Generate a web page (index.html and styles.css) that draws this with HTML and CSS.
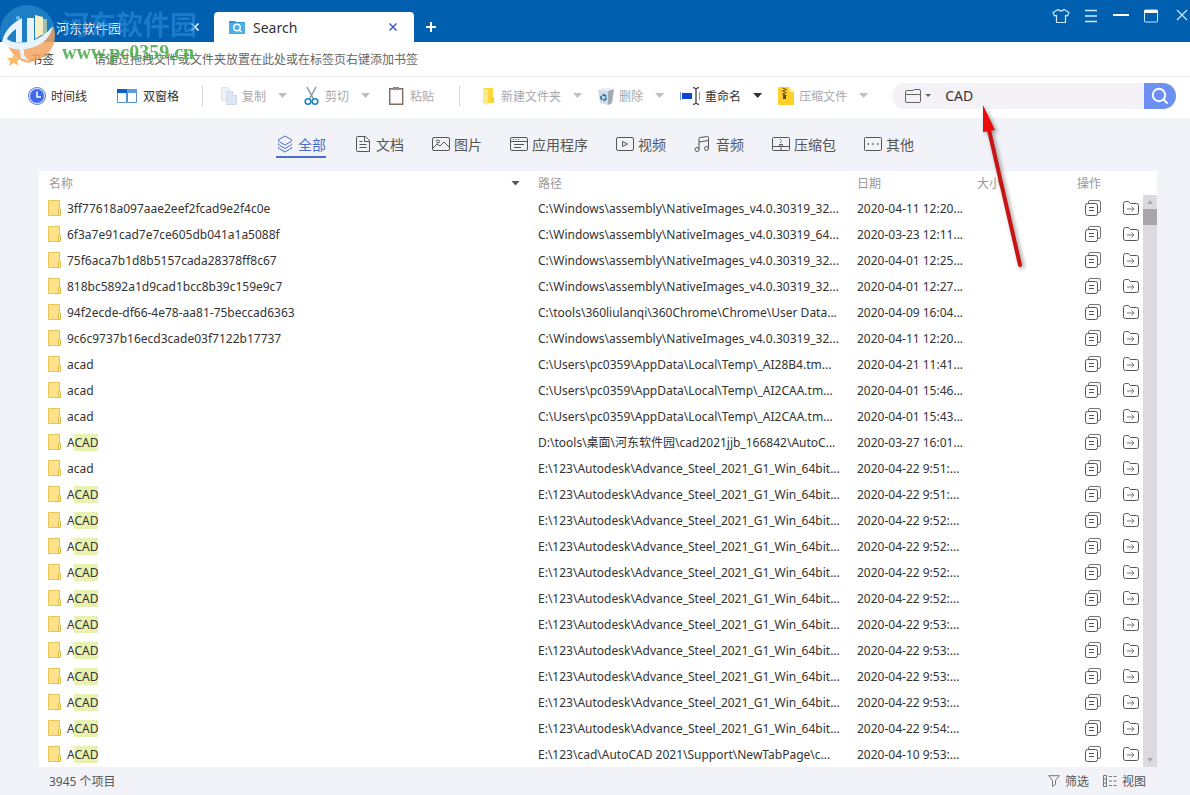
FILE: index.html
```html
<!DOCTYPE html>
<html lang="zh-CN">
<head>
    <meta charset="UTF-8">
    <meta name="viewport" content="width=device-width, initial-scale=1.0">
    <title>Search</title>
    <link rel="stylesheet" href="styles.css">
</head>
<body>
    <svg class="defs" width="0" height="0">
        <symbol id="i-folder" viewBox="0 0 14 16">
            <path d="M.5.5h11v15H.5z" fill="#fde28a" stroke="#e6c455"/>
            <path d="M10.5 9.500c0-1 2-1 2 0v6h-2z" fill="#fff0a8" stroke="#dfbb45"/>
        </symbol>
        <symbol id="i-copy" viewBox="0 0 16 16">
            <path d="M3.500 3V2q0-1.500 1.500-1.500h9q1.500 0 1.500 1.500v9q0 1.500-1.500 1.500h-1" fill="none" stroke="#777"/>
            <rect x=".5" y="3.500" width="12" height="12" rx="2" fill="#fff" stroke="#555"/>
            <path d="M4 7.500h5M4 10.500h5" stroke="#555"/>
        </symbol>
        <symbol id="i-move" viewBox="0 0 16 14">
            <path d="M.5 11.500v-9Q.5.500 2.500.500h3l2 2h6q2 0 2 2v7q0 2-2 2h-11q-2 0-2-2z" fill="none" stroke="#555"/>
            <path d="M4 8h7M8.500 5.500L11 8l-2.500 2.500" fill="none" stroke="#777"/>
        </symbol>
    </svg>

    <header class="titlebar">
        <div class="tabs">
            <div class="tab">
                <svg width="14" height="18" viewBox="0 0 14 18"><path d="M1 1h12v16H1z" fill="#fde28a"/></svg>
                <span class="tab-title">河东软件园</span>
                <button class="tab-close" aria-label="关闭">
                    <svg width="8" height="8" viewBox="0 0 8 8"><path d="M.5.5l7 7M7.500.5l-7 7" stroke="currentColor" stroke-width="1.500"/></svg>
                </button>
            </div>
            <div class="tab active">
                <svg width="16" height="14" viewBox="0 0 16 14">
                    <path d="M0 1h6l1 1h9v12H0z" fill="#2f97d8"/><path d="M0 3h16v11H0z" fill="#4cb0e8"/>
                    <circle cx="8" cy="7.500" r="3.200" fill="none" stroke="#fff" stroke-width="1.400"/><path d="M10.300 10l2 2" stroke="#fff" stroke-width="1.400"/>
                </svg>
                <span class="tab-title">Search</span>
                <button class="tab-close" aria-label="关闭">
                    <svg width="8" height="8" viewBox="0 0 8 8"><path d="M.5.5l7 7M7.500.5l-7 7" stroke="currentColor" stroke-width="1.500"/></svg>
                </button>
            </div>
            <button class="tab-add" aria-label="新标签页">
                <svg width="10" height="10" viewBox="0 0 10 10"><path d="M5 0v10M0 5h10" stroke="#fff" stroke-width="2"/></svg>
            </button>
        </div>
        <div class="window-buttons">
            <button aria-label="皮肤"><svg width="18" height="16" viewBox="0 0 18 16"><path d="M6 1.500L1 4.500l1.500 3.500 2-.7V14.500h9V7.300l2 .7L17 4.500l-5-3Q9 4.500 6 1.500z" fill="none" stroke="#cfeaff" stroke-width="1.200" stroke-linejoin="round"/></svg></button>
            <button aria-label="菜单"><svg width="18" height="16" viewBox="0 0 18 16"><path d="M3 2.500h12M3 8h12M3 13.500h12" stroke="#cfeaff" stroke-width="1.300"/></svg></button>
            <button aria-label="最小化"><svg width="18" height="16" viewBox="0 0 18 16"><path d="M1 7h16" stroke="#fff" stroke-width="2"/></svg></button>
            <button aria-label="最大化"><svg width="18" height="16" viewBox="0 0 18 16"><rect x="2.500" y="2" width="13" height="12" rx="1" fill="none" stroke="#cfeaff"/><path d="M2 3.500h14" stroke="#fff" stroke-width="3"/></svg></button>
            <button aria-label="关闭窗口"><svg width="18" height="16" viewBox="0 0 18 16"><path d="M5 2l10 10M15 2L5 12" stroke="#cfeaff" stroke-width="1.200"/></svg></button>
        </div>
    </header>

    <div class="bookmarks">
        <span class="bookmarks-label">书签</span>
        <span class="bookmarks-hint">请通过拖拽文件或文件夹放置在此处或在标签页右键添加书签</span>
    </div>

    <div class="toolbar">
        <div class="group group-view">
            <button class="tool">
                <svg width="18" height="18" viewBox="0 0 18 18"><circle cx="9" cy="9" r="9" fill="#5b78d8"/><circle cx="9" cy="9" r="8" fill="#dfe8ff"/><circle cx="9" cy="9" r="7" fill="#3f6ae8"/><path d="M9 4.500V10h4" fill="none" stroke="#fff" stroke-width="1.500"/></svg>
                时间线
            </button>
            <button class="tool">
                <svg width="22" height="16" viewBox="0 0 22 16"><path d="M1.500 1.500h9v13h-9zM11.500 1.500h9v13h-9z" fill="#fff" stroke="#5590c8"/><path d="M1 1h10v4H1z" fill="#0b62c4"/><path d="M11 1h10v4H11z" fill="#5c9be0"/></svg>
                双窗格
            </button>
        </div>
        <div class="group">
            <button class="tool" disabled>
                <svg width="16" height="18" viewBox="0 0 16 18"><path d="M.5.5h6l3 3v10h-9z" fill="#f0f2f5" stroke="#dde0e5"/><path d="M5.500 4.500h6l4 4v9h-10z" fill="#dce7f3" stroke="#cfdae6"/><path d="M11.500 4.500v4h4" fill="#fff" stroke="#cfdae6"/></svg>
                复制<i class="caret"></i>
            </button>
            <button class="tool" disabled>
                <svg width="16" height="20" viewBox="0 0 16 20"><path d="M3 1l6.500 12M12 1L5.500 13" stroke="#8b96a0" stroke-width="1.500"/><circle cx="4" cy="15.500" r="2.800" fill="none" stroke="#1b86c0" stroke-width="1.600"/><circle cx="11" cy="15.500" r="2.800" fill="none" stroke="#1b86c0" stroke-width="1.600"/></svg>
                剪切<i class="caret"></i>
            </button>
            <button class="tool" disabled>
                <svg width="18" height="20" viewBox="0 0 18 20"><path d="M2.700 2.700h13v15.600h-13z" fill="#fbfbfd" stroke="#806a5c" stroke-width="1.400"/><path d="M6 1h6v3H6z" fill="#8d8d90"/></svg>
                粘贴
            </button>
        </div>
        <div class="group group-file">
            <button class="tool" disabled>
                <svg width="16" height="18" viewBox="0 0 16 18"><path d="M3 1h10v15H3z" fill="#ffd93b"/><path d="M3 1l5 2v15l-5-2z" fill="#ffe98a"/><path d="M11 10h3v6h-3z" fill="#f8cf35"/></svg>
                新建文件夹<i class="caret"></i>
            </button>
            <button class="tool" disabled>
                <svg width="16" height="18" viewBox="0 0 16 18"><path d="M0 3l6-2 10 1-2 14-4 2-8-2z" fill="#d5dae0"/><path d="M10 4l6-2-2 14-4 2z" fill="#a5abb5"/><path d="M0 3l6-2 10 1-6 2z" fill="#eceff2"/><circle cx="5.500" cy="10.500" r="2.500" fill="none" stroke="#1978ba" stroke-width="1.800" stroke-dasharray="4 1.200"/></svg>
                删除<i class="caret"></i>
            </button>
            <button class="tool">
                <svg width="20" height="18" viewBox="0 0 20 18"><path d="M.5 5v8M19.500 5v8" stroke="#6b9ad8"/><path d="M2 6h10v6H2z" fill="#0b45d8"/><path d="M13 .7q2 0 3 1.300 1-1.300 3-1.300M16 2v14M13 17.300q2 0 3-1.300 1 1.300 3 1.300" fill="none" stroke="#333" stroke-width="1.200"/></svg>
                重命名<i class="caret"></i>
            </button>
            <button class="tool" disabled>
                <svg width="16" height="18" viewBox="0 0 16 18"><path d="M0 0h11l5 5v13H0z" fill="#ffcf2b"/><path d="M11 0l5 5h-5z" fill="#fff0a8"/><path d="M4.500 1l4 1.500-4 1.500 4 1.500-4 1.500 4 1.500" fill="none" stroke="#6d5a20"/><path d="M5 8h3v4H5z" fill="#5a4b22"/></svg>
                压缩文件<i class="caret"></i>
            </button>
        </div>
        <form class="search">
            <button type="button" class="search-scope" aria-label="搜索范围">
                <svg width="16" height="14" viewBox="0 0 16 14"><path d="M.5 12V3q0-1.500 1.500-1.500h6l1.500-1H14q1.500 0 1.500 1.500v10q0 1.500-1.500 1.500H2Q.5 13.500.5 12zM.5 5.500h15" fill="none" stroke="#666"/></svg>
                <i class="caret"></i>
            </button>
            <input class="search-input" type="text" aria-label="搜索" value="CAD">
            <button type="button" class="search-go" aria-label="开始搜索">
                <svg width="18" height="18" viewBox="0 0 18 18"><circle cx="8" cy="8" r="6.200" fill="none" stroke="#fff" stroke-width="2"/><path d="M12.500 12.500l4 4" stroke="#fff" stroke-width="2"/></svg>
            </button>
        </form>
    </div>

    <nav class="categories">
        <a href="#" class="category current">
            <svg width="18" height="18" viewBox="0 0 18 18"><path d="M9 1l6.500 3.700v1.500L9 10 2.500 6.200V4.700zM2.500 8.500v1.200L9 13.500l6.500-3.800V8.500M2.500 12v1.200L9 17l6.500-3.800V12"/></svg>全部
        </a>
        <a href="#" class="category">
            <svg width="18" height="18" viewBox="0 0 18 18"><path d="M3.500 1.500h8l4 4v11h-12q-1 0-1-1v-13q0-1 1-1zM10.500 2v4.500h5M5.500 6.500h3M5.500 9.500h7M5.500 12.500h7"/></svg>文档
        </a>
        <a href="#" class="category">
            <svg width="18" height="18" viewBox="0 0 18 18"><rect x=".5" y="2.500" width="17" height="13" rx="1.500"/><circle cx="6" cy="6.500" r="1.500"/><path d="M1 13l4-4 3 2 4-4 5 5"/></svg>图片
        </a>
        <a href="#" class="category">
            <svg width="18" height="18" viewBox="0 0 18 18"><rect x=".5" y="2.500" width="17" height="13" rx="1.500"/><path d="M.5 6.500h17M3 4.500h1M5.500 4.500h1M8 4.500h1M4 9.500h10M4 12.500h7"/></svg>应用程序
        </a>
        <a href="#" class="category">
            <svg width="18" height="18" viewBox="0 0 18 18"><rect x=".5" y="2.500" width="17" height="13" rx="1.500"/><path d="M6.500 6.500v5l5-2.500z"/></svg>视频
        </a>
        <a href="#" class="category">
            <svg width="18" height="18" viewBox="0 0 18 18"><circle cx="3" cy="14.500" r="2"/><circle cx="12.500" cy="13.500" r="2"/><path d="M5 14.500V3.500q0-1 1-1l7.500-1q1 0 1 1v11M5 7l9.500-1.500"/></svg>音频
        </a>
        <a href="#" class="category">
            <svg width="18" height="18" viewBox="0 0 18 18"><rect x=".5" y="2.500" width="17" height="13" rx="1"/><path d="M.5 11.500h17M8.500 4v1M9.500 5.500v1M8.500 7v1M7.500 11.500v-2h3v2M9 12v3"/></svg>压缩包
        </a>
        <a href="#" class="category">
            <svg width="18" height="18" viewBox="0 0 18 18"><rect x=".5" y="2.500" width="17" height="13" rx="1"/><path d="M3.500 9h1.500M8.200 9h1.500M13 9h1.500" stroke-width="1.500"/></svg>其他
        </a>
    </nav>

    <main class="results">
        <table class="files">
            <thead>
                <tr>
                    <th class="col-name"><span class="sortable">名称<i class="caret"></i></span></th>
                    <th class="col-path">路径</th>
                    <th class="col-date">日期</th>
                    <th class="col-size">大小</th>
                    <th class="col-ops">操作</th>
                </tr>
            </thead>
            <tbody id="rows"></tbody>
        </table>
        <div class="scrollbar">
            <i class="arrow-up"></i>
            <div class="thumb"></div>
            <i class="arrow-down"></i>
        </div>
    </main>

    <footer class="statusbar">
        <span class="count">3945 个项目</span>
        <button class="status-button">
            <svg width="12" height="12" viewBox="0 0 12 12"><path d="M.7.7h10.600L7.500 5.500v4l-3 2v-6z" fill="none" stroke="#777"/></svg>筛选
        </button>
        <button class="status-button">
            <svg width="14" height="12" viewBox="0 0 14 12"><path d="M.5.5h3v11h-3zM.5 4h3M.5 8h3M6 1.500h3M10.500 1.500h3M6 6h3M10.500 6h3M6 10.500h3M10.500 10.500h3" fill="none" stroke="#777"/></svg>视图
        </button>
    </footer>

    <div class="watermark">
        <svg class="watermark-logo" width="58" height="68" viewBox="0 0 58 68">
            <path d="M1 40A27 27 0 0 1 54 25Q48 44 14 44 6 44 1 40z" fill="#3b9ddc" opacity=".5"/>
            <path d="M8 46Q30 48 54 27 60 56 28 63 14 60 8 46z" fill="#f4a460" opacity=".85"/>
            <path d="M2 42Q5 27 22 18v24h-6V29Q9 34 7 39q8 6 22 3 14-4 24-16-4 17-22 22Q12 53 2 42zM27 18h7v24h-7zM19 46h5v9l5 6-8-3z" fill="#e8f4fc"/>
            <path d="M35 15l8 2v17l-8 5z" fill="#f6efc4"/>
            <circle cx="18" cy="18" r="2" fill="#6fc0f0"/>
            <path d="M14 54l2 4 5 0-4 3 2 5-5-3-5 3 1-5-3-3h5z" fill="#f9bc6a"/>
        </svg>
        <span class="watermark-name">河东软件园</span>
        <span class="watermark-url">www.pc0359.cn</span>
    </div>

    <svg class="pointer" width="60" height="176" viewBox="0 0 60 176">
        <path d="M45 165L14 30" stroke="#c81414" stroke-width="4" stroke-linecap="round"/>
        <path d="M8 5L20 30 8 32z" fill="#f00808"/>
    </svg>

    <script>
        const steel = 'E:\\123\\Autodesk\\Advance_Steel_2021_G1_Win_64bit...';
        const native32 = 'C:\\Windows\\assembly\\NativeImages_v4.0.30319_32...';
        const native64 = 'C:\\Windows\\assembly\\NativeImages_v4.0.30319_64...';
        const files = [
            ['3ff77618a097aae2eef2fcad9e2f4c0e', native32, '2020-04-11 12:20...'],
            ['6f3a7e91cad7e7ce605db041a1a5088f', native64, '2020-03-23 12:11...'],
            ['75f6aca7b1d8b5157cada28378ff8c67', native32, '2020-04-01 12:25...'],
            ['818bc5892a1d9cad1bcc8b39c159e9c7', native32, '2020-04-01 12:27...'],
            ['94f2ecde-df66-4e78-aa81-75beccad6363', 'C:\\tools\\360liulanqi\\360Chrome\\Chrome\\User Data...', '2020-04-09 16:04...'],
            ['9c6c9737b16ecd3cade03f7122b17737', native32, '2020-04-11 12:20...'],
            ['acad', 'C:\\Users\\pc0359\\AppData\\Local\\Temp\\_AI28B4.tm...', '2020-04-21 11:41...'],
            ['acad', 'C:\\Users\\pc0359\\AppData\\Local\\Temp\\_AI2CAA.tm...', '2020-04-01 15:46...'],
            ['acad', 'C:\\Users\\pc0359\\AppData\\Local\\Temp\\_AI2CAA.tm...', '2020-04-01 15:43...'],
            ['ACAD', 'D:\\tools\\桌面\\河东软件园\\cad2021jjb_166842\\AutoC...', '2020-03-27 16:01...'],
            ['acad', steel, '2020-04-22 9:51:...'],
            ['ACAD', steel, '2020-04-22 9:51:...'],
            ['ACAD', steel, '2020-04-22 9:52:...'],
            ['ACAD', steel, '2020-04-22 9:52:...'],
            ['ACAD', steel, '2020-04-22 9:52:...'],
            ['ACAD', steel, '2020-04-22 9:52:...'],
            ['ACAD', steel, '2020-04-22 9:53:...'],
            ['ACAD', steel, '2020-04-22 9:53:...'],
            ['ACAD', steel, '2020-04-22 9:53:...'],
            ['ACAD', steel, '2020-04-22 9:53:...'],
            ['ACAD', steel, '2020-04-22 9:54:...'],
            ['ACAD', 'E:\\123\\cad\\AutoCAD 2021\\Support\\NewTabPage\\c...', '2020-04-10 9:53:...']
        ];

        document.getElementById('rows').innerHTML = files.map(([name, path, date]) => `
            <tr>
                <td><span class="file"><svg width="14" height="16"><use href="#i-folder"/></svg><span>${name.replace('CAD', '<mark>CAD</mark>')}</span></span></td>
                <td>${path}</td>
                <td>${date}</td>
                <td></td>
                <td><span class="ops">
                    <button aria-label="复制"><svg width="16" height="16"><use href="#i-copy"/></svg></button>
                    <button aria-label="打开位置"><svg width="16" height="14"><use href="#i-move"/></svg></button>
                </span></td>
            </tr>`).join('');
    </script>
</body>
</html>
```
FILE: styles.css
```css
* {
    box-sizing: border-box;
}
body {
    margin: 0;
    min-height: 100vh;
    display: flex;
    flex-direction: column;
    position: relative;
    overflow: hidden;
    background: #f2f3f8;
    color: #333;
    font-family: "Noto Sans", "Noto Sans CJK SC", sans-serif;
    font-size: 12px;
}
button {
    display: flex;
    align-items: center;
    padding: 0;
    border: none;
    background: none;
    color: inherit;
    font: inherit;
    cursor: pointer;
}
svg {
    flex: none;
}
.defs {
    position: absolute;
}
.caret {
    width: 9px;
    height: 5px;
    background: currentColor;
    clip-path: polygon(0 0, 100% 0, 50% 100%);
}

/* title bar */
.titlebar {
    display: flex;
    justify-content: space-between;
    height: 42px;
    background: #005fae;
    color: #fff;
}
.tabs {
    display: flex;
    align-items: flex-end;
    padding-left: 14px;
}
.tab {
    display: flex;
    align-items: center;
    gap: 8px;
    width: 200px;
    height: 30px;
    padding: 0 15px 0 20px;
    border-radius: 4px 4px 0 0;
    font-size: 13px;
}
.tab.active {
    padding: 0 17px 0 15px;
    background: #fff;
    color: #333;
    font-size: 14px;
}
.tab-title {
    flex: 1;
}
.active .tab-close {
    color: #3f5fc8;
}
.tab-add {
    height: 30px;
    margin-left: 12px;
}
.window-buttons {
    display: flex;
    align-items: flex-start;
    gap: 12px;
    padding-top: 8px;
}

/* bookmarks */
.bookmarks {
    display: flex;
    align-items: center;
    gap: 40px;
    height: 35px;
    padding-left: 30px;
    border-bottom: 1px solid #e6e6ea;
    background: #fff;
}
.bookmarks-hint {
    color: #666;
}

/* toolbar */
.toolbar {
    display: flex;
    align-items: center;
    height: 41px;
    padding: 0 14px 4px 28px;
    background: #fff;
}
.group {
    display: flex;
    align-items: center;
    gap: 17px;
    height: 20px;
    margin-left: 23px;
    padding-left: 18px;
    border-left: 1px solid #d8d8dc;
}
.group-view {
    gap: 29px;
    margin-left: 0;
    padding-left: 0;
    border-left: none;
}
.group-file {
    gap: 16px;
    margin-left: 25px;
    padding-left: 20px;
}
.tool {
    gap: 5px;
    white-space: nowrap;
}
.tool:disabled {
    color: #a8a8ac;
    cursor: default;
}
.tool .caret {
    margin-left: 7px;
}
.tool:disabled .caret {
    background: #c0c0c4;
}
.search {
    display: flex;
    flex: 1;
    height: 26px;
    margin-left: 24px;
    overflow: hidden;
    border-radius: 13px;
    background: #f4f2f6;
}
.search-scope {
    gap: 4px;
    padding: 0 14px 0 13px;
    color: #666;
}
.search-scope .caret {
    width: 6px;
    height: 3px;
}
.search-input {
    flex: 1;
    min-width: 0;
    padding: 0;
    border: none;
    outline: none;
    background: none;
    color: #333;
    font: inherit;
    font-size: 14px;
}
.search-go {
    justify-content: center;
    width: 32px;
    background: #6e8ff2;
}

/* category filter */
.categories {
    display: flex;
    justify-content: center;
    gap: 28px;
    height: 53px;
    padding-top: 13px;
}
.category {
    display: flex;
    align-items: center;
    gap: 4px;
    height: 27px;
    padding-bottom: 2px;
    color: #555;
    font-size: 14px;
    text-decoration: none;
}
.category svg {
    fill: none;
    stroke: currentColor;
}
.category.current {
    padding-bottom: 0;
    border-bottom: 2px solid #4a6ed0;
    color: #4a6ed0;
}

/* results */
.results {
    display: flex;
    margin: 0 33px 0 39px;
    background: #fff;
}
.files {
    flex: 1;
    table-layout: fixed;
    border-collapse: collapse;
    white-space: nowrap;
}
.files th {
    height: 24px;
    padding: 0 10px;
    color: #999;
    font-weight: normal;
    text-align: left;
}
.files td {
    height: 26px;
    padding: 0 0 0 10px;
}
.files td:last-child {
    padding-left: 18px;
}
.col-path {
    width: 319px;
}
.col-date {
    width: 120px;
}
.col-size {
    width: 100px;
}
.col-ops {
    width: 76px;
}
.sortable {
    display: flex;
    align-items: center;
    justify-content: space-between;
    margin-right: -2px;
}
.sortable .caret {
    color: #555;
}
.file {
    display: flex;
    align-items: center;
    gap: 5px;
    margin-left: -1px;
}
.file mark {
    background: #e8f2b0;
    color: inherit;
}
.ops {
    display: flex;
    align-items: center;
    gap: 22px;
}
.scrollbar {
    display: flex;
    flex-direction: column;
    align-items: center;
    width: 14px;
    margin-top: 24px;
    padding: 5px 0;
    background: #dcdade;
}
.scrollbar .thumb {
    width: 100%;
    height: 16px;
    margin: 5px 0 auto;
    background: #a9a6aa;
}
.arrow-up,
.arrow-down {
    width: 6px;
    height: 4px;
    background: #aaa;
    clip-path: polygon(50% 0, 100% 100%, 0 100%);
}
.arrow-down {
    clip-path: polygon(0 0, 100% 0, 50% 100%);
}

/* status bar */
.statusbar {
    display: flex;
    align-items: center;
    gap: 14px;
    height: 28px;
    padding: 0 44px 0 49px;
    color: #555;
}
.count {
    margin-right: auto;
}
.status-button {
    gap: 5px;
}

/* overlays */
.watermark {
    position: absolute;
    top: 0;
    left: 0;
    display: grid;
    grid-template-columns: 62px auto;
    grid-template-rows: 42px 26px;
    pointer-events: none;
}
.watermark-logo {
    grid-row: 1 / 3;
}
.watermark-name {
    padding-top: 8px;
    color: #2a8fe0;
    font-size: 27px;
    font-weight: bold;
    line-height: 34px;
    opacity: 0.6;
}
.watermark-url {
    color: #4fae50;
    font-family: "Liberation Serif", serif;
    font-size: 20px;
    font-weight: bold;
    line-height: 20px;
    opacity: 0.9;
}
.pointer {
    position: absolute;
    top: 100px;
    left: 975px;
    filter: drop-shadow(2px 2px 2px rgba(0, 0, 0, 0.4));
    pointer-events: none;
}
```
